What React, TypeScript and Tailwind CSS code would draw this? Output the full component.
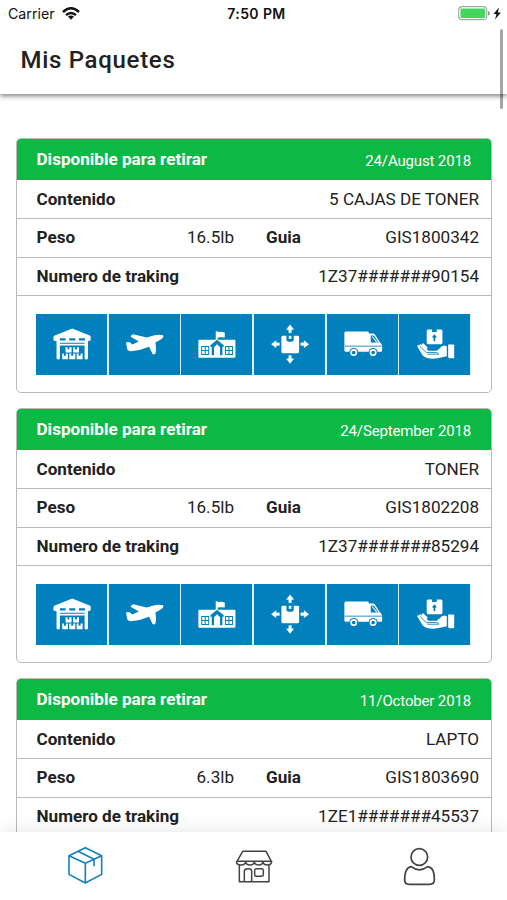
import React from "react";

type Package = {
  date: string;
  content: string;
  weight: string;
  guide: string;
  tracking: string;
};

const packages: Package[] = [
  { date: "24/August 2018", content: "5 CAJAS DE TONER", weight: "16.5lb", guide: "GIS1800342", tracking: "1Z37#######90154" },
  { date: "24/September 2018", content: "TONER", weight: "16.5lb", guide: "GIS1802208", tracking: "1Z37#######85294" },
  { date: "11/October 2018", content: "LAPTO", weight: "6.3lb", guide: "GIS1803690", tracking: "1ZE1#######45537" },
];

const BLUE = "#0080bd";

function Step({ viewBox, children }: { viewBox: string; children: React.ReactNode }) {
  return (
    <div className="h-[61px] bg-[#0080bd]">
      <svg viewBox={viewBox} className="h-full w-full" fill="white">
        {children}
      </svg>
    </div>
  );
}

function Warehouse() {
  return (
    <Step viewBox="18.500 27 213 182">
      <path d="M127 70 L181 92 Q183 94 182 106 L174 108 V159 Q174 163 169 163 Q164 163 164 159 V121 H90 V159 Q90 163 85 163 Q80 163 80 159 V108 L71 106 Q70 94 73 92 Z" />
      <path fill={BLUE} d="M90 99h17v7H90zM118 99h18v7h-18zM147 99h18v7h-18zM90 113h74v3H90z" />
      <path d="M107 126h6v7h5v-7h7v16h-18zM130 126h5v7h6v-7h6v16h-17zM97 145h5v7h6v-7h6v17H97zM118 145h6v7h6v-7h6v17h-18zM140 145h6v7h6v-7h6v17h-18z" />
    </Step>
  );
}

function Plane() {
  return (
    <Step viewBox="12 27 213 182">
      <path d="M63 111 L74 111 L82 118 L101 109 L77 95 Q76 90 84 87 L125 97 L148 90 Q164 87 174 90 Q177 95 168 102 L151 112 Q154 133 151 145 Q147 150 142 146 L132 125 Q105 137 78 138 Q68 138 66 130 Z" />
    </Step>
  );
}

function School() {
  return (
    <Step viewBox="230 27 213 182">
      <path d="M334 78h6v3q9-2 21 1v15q-11-2-21 0v7h50q3 0 3 3v48q0 3-3 3H285q-3 0-3-3v-48q0-3 3-3h49z" />
      <path fill={BLUE} d="M338 104L358 120V125H354V150H346V127L338 119L330 127V150H322V125H318V120Z" />
      <path d="M338 117l9 9v24h-18v-24z" />
      <path d="M292 124h21v24h-21zM302.5 124v24M292 136h21M363 124h21v24h-21zM373.500 124v24M363 136h21" fill="none" stroke={BLUE} strokeWidth="3" />
    </Step>
  );
}

function Distribution() {
  return (
    <Step viewBox="13 27 213 182">
      <path d="M99 92h11v12q0 6 11 6t11-6V92h12q4 0 4 4v44q0 4-4 4H99q-4 0-4-4V96q0-4 4-4z" />
      <rect x="117" y="92" width="8" height="9" />
      <path d="M121 59l11 14h-7v10h-8V73h-7zM121 175l11-14h-7v-10h-8v10h-7zM65 117l14-11v7h10v8H79v7zM177 117l-14-11v7h-10v8h10v7z" stroke="white" strokeWidth="1" strokeLinejoin="round" />
    </Step>
  );
}

function Van() {
  return (
    <Step viewBox="231 27 213 182">
      <path d="M287 79h65q4 0 4 4v2h13q4 0 7 5l13 21q7 4 7 12v13q0 4-4 4H288q-5 0-5-5V84q0-5 4-5z" />
      <path fill={BLUE} d="M362 91h7q3 0 5 4l11 17h-23z" />
      <path d="M366 94l14 17" stroke="white" strokeWidth="3" />
      <path d="M284 123h111" stroke={BLUE} strokeWidth="2.5" />
      <circle cx="311" cy="142" r="13.500" fill={BLUE} />
      <circle cx="369" cy="142" r="13.500" fill={BLUE} />
      <circle cx="311" cy="142" r="8" fill={BLUE} stroke="white" strokeWidth="5" />
      <circle cx="369" cy="142" r="8" fill={BLUE} stroke="white" strokeWidth="5" />
    </Step>
  );
}

function Delivery() {
  return (
    <Step viewBox="59.500 27 210 182">
      <path d="M145 73h12v8h14v-8h12q5 0 5 5v34q0 5-5 5h-38q-4 0-4-5V78q0-5 4-5z" />
      <path d="M164 108V93M159 97l5-6 5 6" fill="none" stroke={BLUE} strokeWidth="5" />
      <path d="M112 122q5-4 11 0l21 15h27l9-8q3-6 14-8l7 2v30l-17 4q-12 4-32 3-15-1-24-11z" />
      <path d="M122 121l20 16M130 118l10 10" stroke="white" strokeWidth="7" strokeLinecap="round" />
      <path d="M120 123l20 19h30q7 1 7 5h-34" fill="none" stroke={BLUE} strokeWidth="2.500" />
      <path d="M205 118h16q2 0 2 2v37q0 2-2 2h-13l-3-3z" />
    </Step>
  );
}

function Card({ item }: { item: Package }) {
  const row = "flex h-[38.6px] shrink-0 items-center border-b-[1.5px] border-[#b9b9b9] pt-[1px] pr-[12px] pl-[20px] text-[17.1px]";
  return (
    <section className="flex h-[255px] shrink-0 flex-col overflow-hidden rounded-[5px] border-[1.5px] border-[#b9b9b9] text-[#222]">
      <header className="flex h-[41.4px] shrink-0 items-center justify-between bg-[#0cb944] pr-[20px] pl-[20px] text-white">
        <h2 className="text-[17.1px] font-bold">Disponible para retirar</h2>
        <span className="pt-[3px] text-[15px] tracking-[-0.15px]">{item.date}</span>
      </header>
      <div className={row}>
        <b>Contenido</b>
        <span className="ml-auto">{item.content}</span>
      </div>
      <div className={row}>
        <b>Peso</b>
        <span className="ml-auto">{item.weight}</span>
        <b className="ml-[32px] w-[60px]">Guia</b>
        <span className="w-[153px] text-right">{item.guide}</span>
      </div>
      <div className={row}>
        <b>Numero de traking</b>
        <span className="ml-auto">{item.tracking}</span>
      </div>
      <div className="mt-[18px] mr-[20.500px] ml-[19.500px] grid grid-cols-6 gap-[1.500px] bg-[#d9effa]">
        <Warehouse />
        <Plane />
        <School />
        <Distribution />
        <Van />
        <Delivery />
      </div>
    </section>
  );
}

function StatusBar() {
  return (
    <div className="grid h-[27px] grid-cols-3 items-center pr-[5px] pl-[8px] font-['Inter',sans-serif] text-[14px] text-[#111]">
      <div className="flex items-center gap-[7px]">
        <span className="text-[14.200px]">Carrier</span>
        <svg className="h-[13px] w-[18px]" viewBox="0 0 18 13" fill="none" stroke="#111" strokeWidth="2.400">
          <path d="M1 5Q9-2.400 17 5M4 8.200Q9 3.800 14 8.200" />
          <path d="M6 9.600Q9 7.400 12 9.600L9 12.700Z" fill="#111" stroke="none" />
        </svg>
      </div>
      <span className="pl-[3px] text-center text-[14px] font-semibold tracking-[0.4px]">7:50 PM</span>
      <svg className="ml-auto h-[15px] w-[44px]" viewBox="0 0 44 15">
        <rect x="0.700" y="0.700" width="28" height="13" rx="3.500" fill="white" stroke="#a8a8a8" strokeWidth="1.200" />
        <rect x="2.500" y="2.500" width="24.500" height="9.500" rx="1" fill="#43d85d" />
        <path d="M30 5q2 .5 2 2.300T30 9.600z" fill="#999" />
        <path d="M41 1.500L35.500 8h3L37 13.500L42.800 6.500h-3z" fill="#111" />
      </svg>
    </div>
  );
}

export default function App() {
  return (
    <div className="relative flex h-[900px] w-[507px] flex-col overflow-hidden bg-white font-['Roboto',sans-serif]">
      <div className="z-10 h-[94px] shrink-0 bg-white shadow-[0_2px_5px_rgba(0,0,0,0.5)]">
        <StatusBar />
        <h1 className="pt-[15px] pl-[20.500px] text-[24px] leading-[36px] font-medium tracking-[0.7px] text-[#222]">Mis Paquetes</h1>
      </div>
      <main className="flex min-h-0 flex-1 flex-col gap-[15px] overflow-hidden pt-[44px] pr-[15px] pl-[15.500px]">
        {packages.map((item) => (
          <Card key={item.guide} item={item} />
        ))}
      </main>
      <nav className="z-10 grid h-[68px] shrink-0 grid-cols-[170px_170px_167px] bg-white shadow-[0_-2px_16px_rgba(0,0,0,0.09)]">
        <svg className="h-[68px] w-[170px]" viewBox="0 96 510 204" fill="none" stroke="#1481b9" strokeWidth="4.800" strokeLinejoin="round">
          <path d="M256 143L305 167V223L256 249L207 223V167ZM207 167L256 190L305 167M256 190V249M234 154L282 178V199" />
        </svg>
        <svg className="h-[68px] w-[170px]" viewBox="0 96 510 204" fill="none" stroke="#444" strokeWidth="4.500" strokeLinejoin="round">
          <path d="M218 154H288L304 184H201ZM199 184H305Q304 195 292 195Q279 195 279 184Q279 195 266 195Q253 195 253 184Q253 195 240 195Q227 195 227 184Q227 195 213 195Q200 195 199 184M208 195V245H297V195M223 245V213Q223 206 234 206Q245 206 245 213V245" />
          <rect x="254" y="206" width="26" height="23" rx="5" />
        </svg>
        <svg className="h-[68px] w-[167px]" viewBox="0 96 501 204" fill="none" stroke="#444" strokeWidth="5.200" strokeLinejoin="round">
          <circle cx="238" cy="171" r="25" />
          <path d="M214 200Q238 219 263 200Q284 202 283 240Q283 253 268 253H208Q194 253 194 240Q194 202 214 200Z" />
        </svg>
      </nav>
      <div className="absolute top-[29px] right-[4px] z-20 h-[80px] w-[3px] rounded-full bg-black/35" />
    </div>
  );
}
